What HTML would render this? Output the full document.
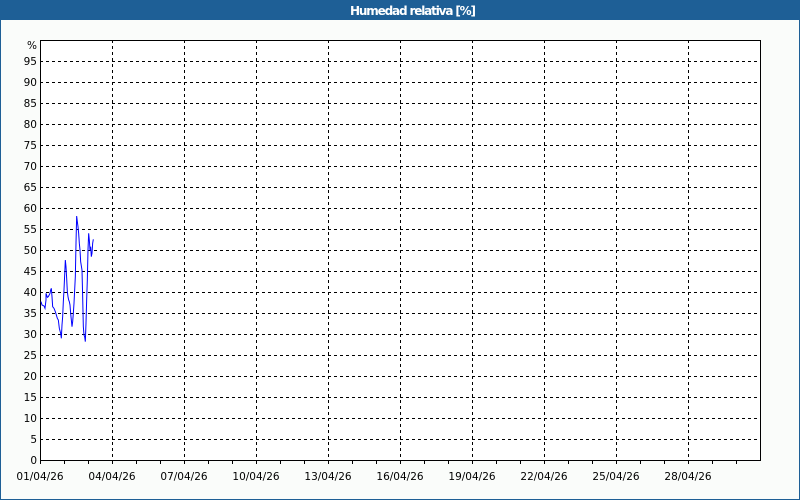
<!DOCTYPE html>
<html><head><meta charset="utf-8"><style>
body{margin:0;width:800px;height:500px;overflow:hidden;background:#fafcfa;font-family:"DejaVu Sans","Liberation Sans",sans-serif}
</style></head><body>
<svg width="800" height="500" xmlns="http://www.w3.org/2000/svg" style="position:absolute;left:0;top:0">
<rect x="0" y="0" width="800" height="500" fill="#fafcfa"/>
<rect x="0" y="0" width="800" height="20" fill="#1e5f96"/>
<rect x="0.5" y="0.5" width="799" height="499" fill="none" stroke="#1e5f96"/>
<text x="350" y="15" font-size="12" font-weight="bold" fill="#fff" font-family="DejaVu Sans, sans-serif" textLength="126">Humedad relativa [%]</text>
<rect x="40" y="40" width="720" height="420" fill="#fff"/>
<g stroke="#000" stroke-dasharray="3,3" stroke-width="1">
<path d="M40 439.5H760M40 418.5H760M40 397.5H760M40 376.5H760M40 355.5H760M40 334.5H760M40 313.5H760M40 292.5H760M40 271.5H760M40 250.5H760M40 229.5H760M40 208.5H760M40 187.5H760M40 166.5H760M40 145.5H760M40 124.5H760M40 103.5H760M40 82.5H760M40 61.5H760"/>
<path d="M112.5 40V460M184.5 40V460M256.5 40V460M328.5 40V460M400.5 40V460M472.5 40V460M544.5 40V460M616.5 40V460M688.5 40V460"/>
</g>
<path d="M40.5 460V40.5H760.5V460.5H40" fill="none" stroke="#000"/>
<g stroke="#000"><path d="M40.5 460v4M64.5 460v4M88.5 460v4M112.5 460v4M136.5 460v4M160.5 460v4M184.5 460v4M208.5 460v4M232.5 460v4M256.5 460v4M280.5 460v4M304.5 460v4M328.5 460v4M352.5 460v4M376.5 460v4M400.5 460v4M424.5 460v4M448.5 460v4M472.5 460v4M496.5 460v4M520.5 460v4M544.5 460v4M568.5 460v4M592.5 460v4M616.5 460v4M640.5 460v4M664.5 460v4M688.5 460v4M712.5 460v4M736.5 460v4"/></g>
<g font-size="10.5" fill="#000" text-anchor="end">
<text x="37" y="49">%</text>
<text x="37" y="65">95</text><text x="37" y="86">90</text><text x="37" y="107">85</text><text x="37" y="128">80</text><text x="37" y="149">75</text><text x="37" y="170">70</text><text x="37" y="191">65</text><text x="37" y="212">60</text><text x="37" y="233">55</text><text x="37" y="254">50</text><text x="37" y="275">45</text><text x="37" y="296">40</text><text x="37" y="317">35</text><text x="37" y="338">30</text><text x="37" y="359">25</text><text x="37" y="380">20</text><text x="37" y="401">15</text><text x="37" y="422">10</text><text x="37" y="443">5</text><text x="37" y="464">0</text>
</g>
<g font-size="10.5" fill="#000" text-anchor="middle">
<text x="40" y="480">01/04/26</text><text x="112" y="480">04/04/26</text><text x="184" y="480">07/04/26</text><text x="256" y="480">10/04/26</text><text x="328" y="480">13/04/26</text><text x="400" y="480">16/04/26</text><text x="472" y="480">19/04/26</text><text x="544" y="480">22/04/26</text><text x="616" y="480">25/04/26</text><text x="688" y="480">28/04/26</text>
</g>
<g transform="translate(30,200) scale(0.3333)">
<polyline fill="none" stroke="#0000ff" stroke-width="3" points="33,305 36,315 42,318 45,325 48,300 48,280 52,292 55,290 60,280 62,270 64,265 66,290 68,320 72,325 76,335 82,355 85,360 88,385 92,400 94,415 96,375 98,350 100,305 102,270 104,225 106,180 108,200 110,235 112,275 114,290 116,300 118,305 120,315 122,340 124,360 126,380 128,365 130,340 132,310 134,270 136,230 138,130 140,48 142,65 144,80 146,100 148,130 150,150 152,185 156,210 158,290 160,380 162,405 164,410 166,425 168,370 170,300 172,240 174,150 176,100 178,120 180,150 182,140 184,170 186,160 188,130 190,118"/>
</g>
</svg>
</body></html>
